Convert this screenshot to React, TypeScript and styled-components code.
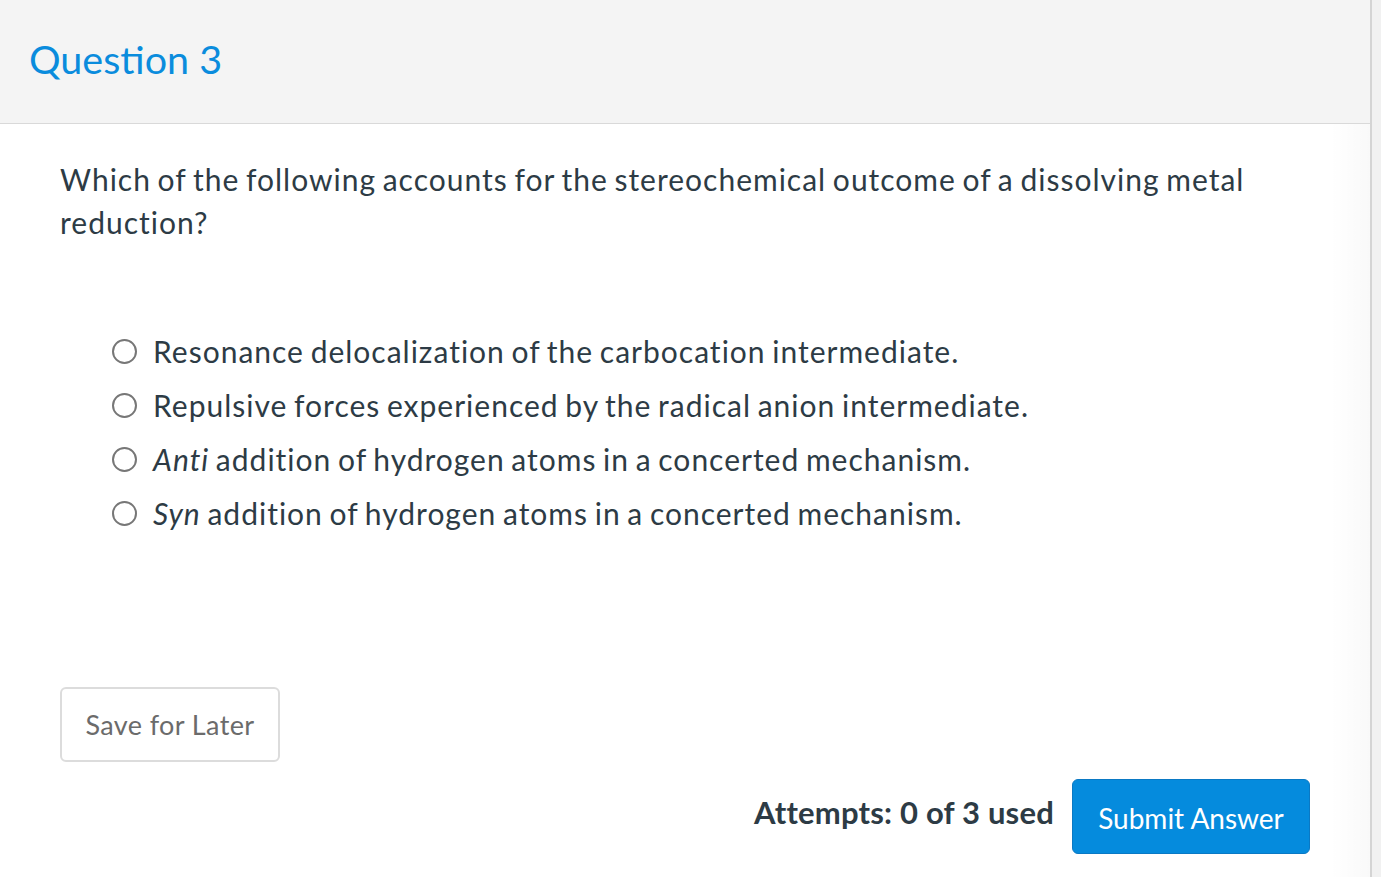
import React from "react";
import styled, { createGlobalStyle } from "styled-components";

const GlobalStyle = createGlobalStyle`
  html, body {
    margin: 0;
    padding: 0;
    background: #ffffff;
    font-family: Lato, "Open Sans", sans-serif;
    color: #2d3b45;
  }
`;

const Page = styled.div`
  display: flex;
  width: 1381px;
  height: 877px;
  overflow: hidden;
`;

const Main = styled.div`
  flex: 1;
  display: flex;
  flex-direction: column;
  background: linear-gradient(to right, rgba(0, 0, 0, 0) 1330px, rgba(0, 0, 0, 0.025) 1370px);
`;

const Scrollbar = styled.div`
  width: 9px;
  border-left: 2px solid #d4d4d4;
  background: #f1f1f1;
`;

const Header = styled.div`
  height: 124px;
  box-sizing: border-box;
  display: flex;
  align-items: center;
  padding: 0 0 5px 29px;
  background: #f4f4f4;
  border-bottom: 1px solid #d9d9d9;
`;

const Title = styled.h2`
  margin: 0;
  font-size: 39.5px;
  font-weight: 400;
  color: #0a8cdd;
  line-height: 1;
`;

const Body = styled.div`
  padding: 34px 60px 0 60px;
  display: flex;
  flex-direction: column;
`;

const QuestionText = styled.p`
  margin: 0;
  font-size: 30px;
  letter-spacing: 1px;
  word-spacing: -2px;
  line-height: 43px;
  max-width: 1200px;
`;

const Options = styled.div`
  margin-top: 80px;
  padding-left: 52px;
  display: flex;
  flex-direction: column;
`;

const Option = styled.label`
  display: flex;
  align-items: center;
  height: 54px;
  font-size: 30px;
  letter-spacing: 1px;
  word-spacing: -2px;
  gap: 16px;
`;

const Radio = styled.span`
  box-sizing: border-box;
  width: 25px;
  height: 25px;
  border-radius: 50%;
  border: 2px solid #777777;
  background: #fff;
  flex-shrink: 0;
`;

const SaveButton = styled.button`
  margin-top: 147px;
  align-self: flex-start;
  width: 220px;
  height: 75px;
  background: #ffffff;
  border: 2px solid #dcdcdc;
  border-radius: 6px;
  font-family: Lato, sans-serif;
  font-size: 27px;
  letter-spacing: 0.4px;
  color: #6b6b6b;
`;

const Footer = styled.div`
  margin-top: 17px;
  display: flex;
  justify-content: flex-end;
  align-items: center;
  gap: 18px;
`;

const Attempts = styled.span`
  font-size: 31px;
  font-weight: 700;
  color: #2d3b45;
  letter-spacing: 0.2px;
  margin-bottom: 10px;
`;

const SubmitButton = styled.button`
  width: 238px;
  height: 75px;
  background: #058bdd;
  border: 1px solid #0a79c4;
  border-radius: 6px;
  font-family: Lato, sans-serif;
  font-size: 28px;
  color: #ffffff;
  padding-top: 3px;
`;

const options: React.ReactNode[] = [
  "Resonance delocalization of the carbocation intermediate.",
  "Repulsive forces experienced by the radical anion intermediate.",
  <>
    <em>Anti</em> addition of hydrogen atoms in a concerted mechanism.
  </>,
  <>
    <em>Syn</em> addition of hydrogen atoms in a concerted mechanism.
  </>,
];

export default function App() {
  return (
    <Page>
      <GlobalStyle />
      <Main>
        <Header>
          <Title>Question 3</Title>
        </Header>
        <Body>
          <QuestionText>
            Which of the following accounts for the stereochemical outcome of a dissolving metal
            reduction?
          </QuestionText>
          <Options>
            {options.map((opt, i) => (
              <Option key={i}>
                <Radio />
                <span>{opt}</span>
              </Option>
            ))}
          </Options>
          <SaveButton>Save for Later</SaveButton>
          <Footer>
            <Attempts>Attempts: 0 of 3 used</Attempts>
            <SubmitButton>Submit Answer</SubmitButton>
          </Footer>
        </Body>
      </Main>
      <Scrollbar />
    </Page>
  );
}
